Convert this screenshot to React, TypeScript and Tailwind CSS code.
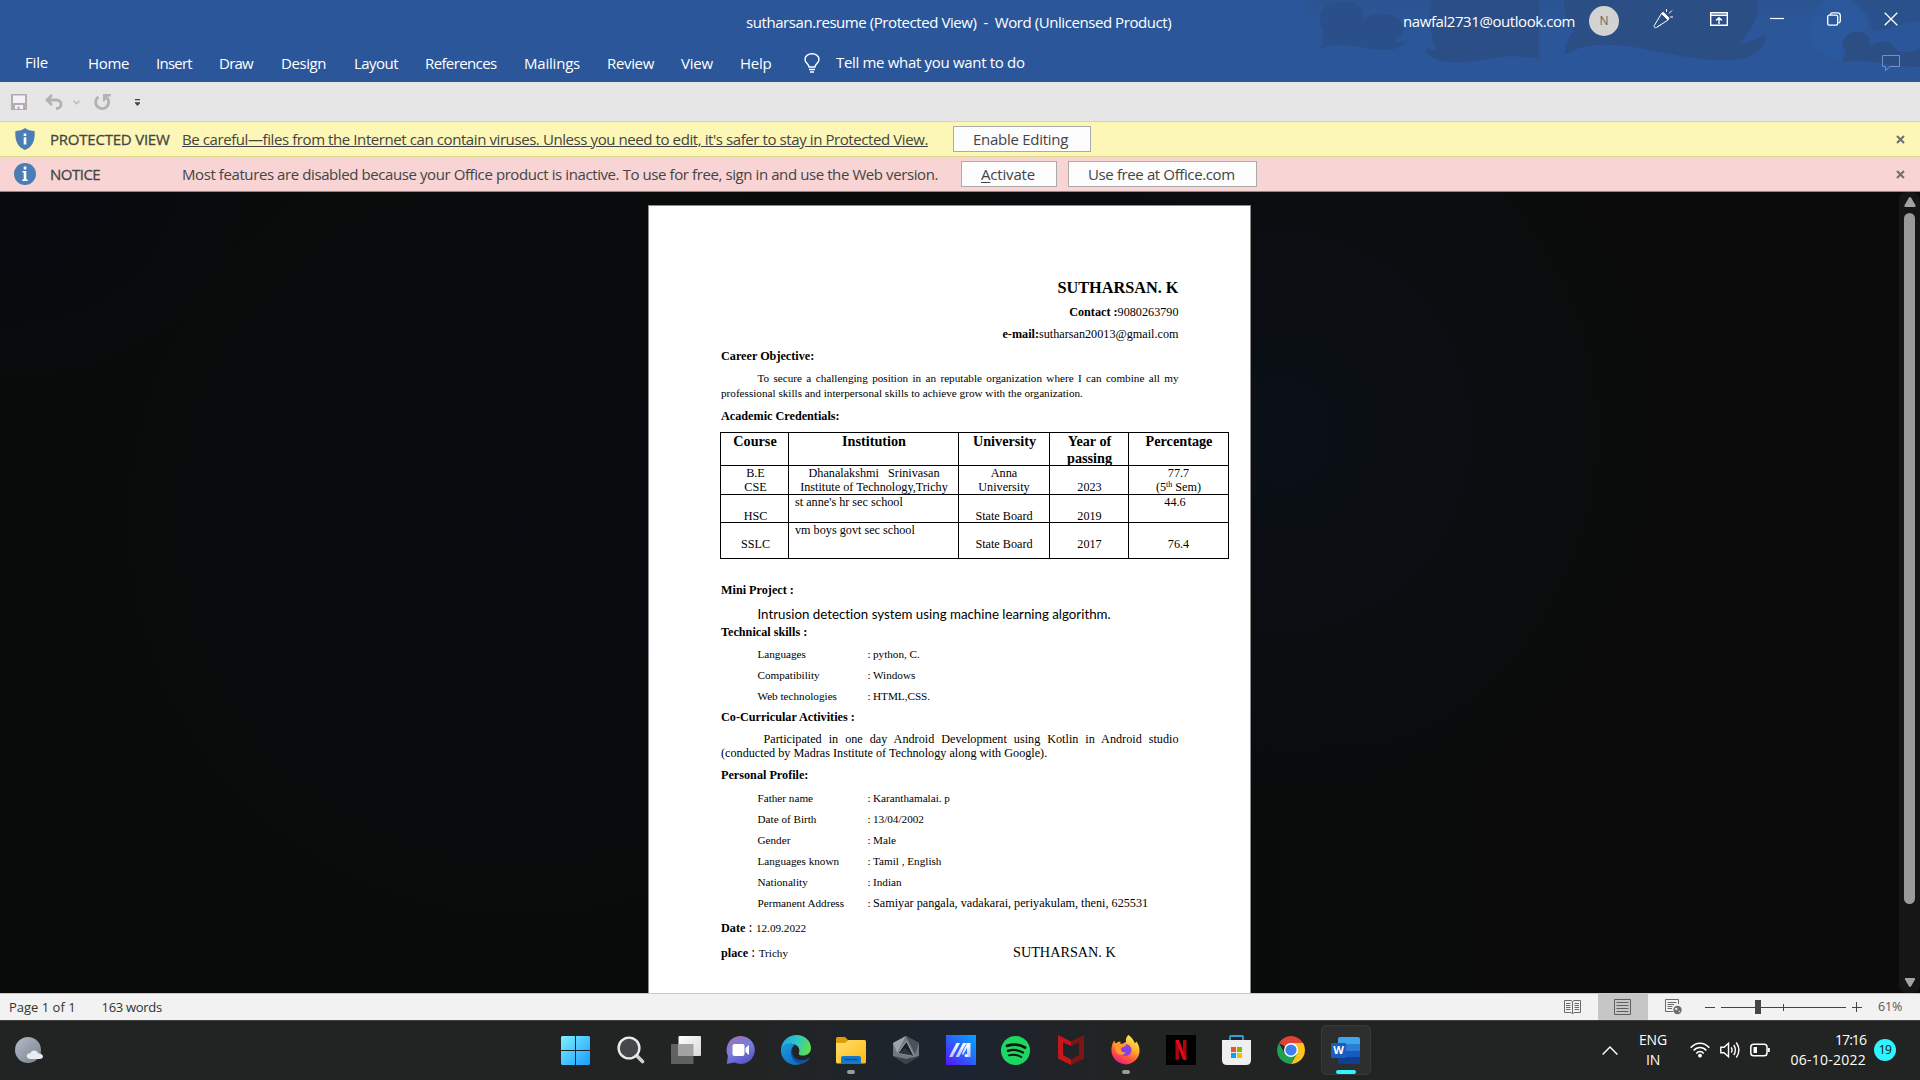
import type { ReactNode } from "react";

/* ---------- Title bar and ribbon tabs ---------- */

const tabs: { label: string; cls: string }[] = [
  { label: "Home", cls: "w-[68px] tracking-[-0.35px]" },
  { label: "Insert", cls: "w-[63px] tracking-[-0.75px]" },
  { label: "Draw", cls: "w-[62px] tracking-[-0.75px]" },
  { label: "Design", cls: "w-[73px] tracking-[-0.43px]" },
  { label: "Layout", cls: "w-[71px] tracking-[-0.54px]" },
  { label: "References", cls: "w-[99px] tracking-[-0.62px]" },
  { label: "Mailings", cls: "w-[83px] tracking-[-0.21px]" },
  { label: "Review", cls: "w-[74px] tracking-[-0.34px]" },
  { label: "View", cls: "w-[59px] tracking-[-0.2px]" },
  { label: "Help", cls: "w-[64px] tracking-[-0.24px]" },
];

function HeaderArt() {
  return (
    <svg className="absolute top-0 right-0 h-[82px] w-[640px]" viewBox="0 0 1568 246" preserveAspectRatio="none">
      <defs>
        <linearGradient id="shade" x1="0" y1="0" x2="0" y2="1">
          <stop offset="0" stopColor="#2b4a7c" stopOpacity="0.6" />
          <stop offset="1" stopColor="#2b579a" stopOpacity="0" />
        </linearGradient>
      </defs>
      <rect x="60" width="1508" height="150" fill="url(#shade)" opacity="0.45" />
      <g fill="#2b4e85">
        <path d="M98 148C104 128 108 112 104 88C92 50 98 8 150 5C196 6 208 26 204 60C230 28 300 40 304 84C300 104 292 116 280 126L312 122C304 146 270 154 230 148C180 138 130 122 98 148Z" opacity="0.75" />
        <path d="M370 0H635V180C590 160 540 170 490 180C430 196 366 186 356 150C362 140 372 152 384 152C366 100 362 50 370 0Z" opacity="0.9" />
        <path d="M697 0H1170C1172 50 1160 92 1124 128C1150 134 1166 112 1188 108C1192 140 1164 176 1110 180C1040 184 980 168 920 154C840 134 760 116 697 166C698 130 708 110 722 92C706 88 694 40 697 0Z" />
        <path d="M1377 188C1384 170 1390 160 1382 146C1370 114 1390 94 1416 96C1440 98 1450 118 1444 140C1468 116 1500 120 1510 150C1530 160 1550 156 1568 148V200C1500 206 1440 168 1377 188Z" />
        <path d="M1404 0H1568V62C1510 72 1476 96 1452 92C1444 50 1430 20 1404 0Z" opacity="0.55" />
      </g>
      <path d="M1334 0H1402C1436 30 1446 90 1430 94C1380 90 1372 130 1376 180C1330 160 1290 150 1300 80C1308 40 1320 20 1334 0Z" fill="#2c5ba3" opacity="0.5" />
    </svg>
  );
}

function WindowControls() {
  return (
    <div className="flex items-center">
      <svg className="mr-[37px] h-5 w-5" viewBox="0 0 20 20" fill="none" stroke="#fff" strokeWidth="1">
        <path d="M8.5 4.5L15 11L3.5 18.5C2 19.3 .6 18 1.3 16.5Z" />
        <path d="M8.5 4.5L10.3 3.2L16 9L15 11Z" fill="#fff" />
        <path d="M5 17.4L7.8 15.7M13.5 0V3M19 1.5L16 4.5M17 8H20" />
      </svg>
      <svg className="mr-[42px] h-[14px] w-[18px]" viewBox="0 0 18 14" fill="none" stroke="#fff" strokeWidth="1.4">
        <path d="M.7 .7H17.3V13.3H.7ZM.7 3.2H17.3M9 12V6M6 8.5L9 5.6L12 8.5" />
      </svg>
      <svg className="mr-[43px] h-[14px] w-[14px]" viewBox="0 0 14 14" stroke="#fff" strokeWidth="1.2">
        <path d="M0 6.5H14" />
      </svg>
      <svg className="mr-[43px] h-[14px] w-[14px]" viewBox="0 0 14 14" fill="none" stroke="#fff" strokeWidth="1.3">
        <rect x=".7" y="3.2" width="10" height="10" rx="1.6" />
        <path d="M3.4 3V2.3C3.6 1.3 4.2 .8 5.2 .8H10.5C12.2 .8 13.3 1.9 13.3 3.6V9C13.3 10 12.6 10.8 11.4 11" />
      </svg>
      <svg className="mr-[22px] h-[14px] w-[14px]" viewBox="0 0 14 14" stroke="#fff" strokeWidth="1.3">
        <path d="M.7 .7L13.3 13.3M13.3 .7L.7 13.3" />
      </svg>
    </div>
  );
}

function Header() {
  return (
    <header className="relative h-[82px] bg-[#2b579a] text-[15px] text-white">
      <HeaderArt />
      <div className="relative flex h-[44px] justify-between">
        <div className="flex items-center pl-[746px] whitespace-pre tracking-[-0.43px]">
          {"sutharsan.resume (Protected View)  -  Word (Unlicensed Product)"}
        </div>
        <div className="flex h-[38px]">
          <span className="mt-[10px] leading-[22px] tracking-[-0.43px]">nawfal2731@outlook.com</span>
          <span className="mt-[6px] mr-[34px] ml-[14px] flex h-[30px] w-[30px] items-center justify-center rounded-full bg-[#d2d2d2] text-[12px] text-[#666]">
            N
          </span>
          <WindowControls />
        </div>
      </div>
      <nav className="relative flex h-[38px] items-center">
        <span className="w-[63.5px] pb-[2px] pl-[25px] tracking-[-0.2px]">File</span>
        <div className="flex pl-[24.5px]">
          {tabs.map((t) => (
            <span key={t.label} className={t.cls}>
              {t.label}
            </span>
          ))}
        </div>
        <svg className="mr-[16px] h-[20px] w-[16px]" viewBox="0 0 16 20" fill="none" stroke="#fff" strokeWidth="1.4">
          <path d="M5 14C5 11 1 10 1 6.5C1 3.2 4 .8 8 .8S15 3.2 15 6.5C15 10 11 11 11 14ZM5 16.5H11M6 19H10" />
        </svg>
        <span className="pb-[2px] tracking-[-0.32px]">Tell me what you want to do</span>
        <svg className="mr-[20px] ml-auto h-[17px] w-[18px]" viewBox="0 0 18 17" fill="none" stroke="#7391c0" strokeWidth="1">
          <path d="M.5 .5H17.5V11.5H7.5L3.5 15.8V11.5H.5Z" />
        </svg>
      </nav>
    </header>
  );
}

/* ---------- Quick access toolbar and message bars ---------- */

function QuickAccess() {
  return (
    <div className="flex h-[40px] items-center border-b border-[#d9d6a0] bg-[#e6e6e6] pt-px pl-[11px]">
      <svg className="h-4 w-4" viewBox="0 0 16 16">
        <path d="M0 0H16V16H0Z" fill="#b1aeb1" />
        <path d="M2 1.5H14V9H2ZM4 11H12V15H8.6V12.4H6.4V15H4Z" fill="#f6f1f8" />
      </svg>
      <svg className="ml-[18px] h-4 w-[18px]" viewBox="0 0 18 16" fill="none" stroke="#b1b1b1" strokeWidth="2.8">
        <path d="M1.5 6H11C18 6 17.5 14.6 11 14.6" />
        <path d="M7 1L2 6L7 11" strokeWidth="2.6" />
      </svg>
      <svg className="ml-[10px] h-[5px] w-[7px]" viewBox="0 0 7 5" fill="none" stroke="#b8b8b8" strokeWidth="1.3">
        <path d="M.5 .8L3.5 3.8L6.5 .8" />
      </svg>
      <svg className="ml-[14px] h-[17px] w-[17px]" viewBox="0 0 17 17" fill="none" stroke="#b1b1b1" strokeWidth="2.8">
        <path d="M4.5 2.8A6.5 6.5 0 1 0 12.8 3.6" />
        <path d="M9 0H16.8V2.4H13L10.5 7.5H9Z" fill="#b1b1b1" stroke="none" />
      </svg>
      <svg className="ml-[24px] h-[7px] w-[5px]" viewBox="0 0 5 7" fill="#444">
        <path d="M0 0H5V1.2H0ZM0 3.2H5V4.2L2.5 7L0 4.2Z" />
      </svg>
    </div>
  );
}

function BarButton({ cls, children }: { cls: string; children: ReactNode }) {
  return (
    <button className={`${cls} flex h-[26px] items-center border border-[#ababab] bg-[#fdfdfd] whitespace-nowrap`}>
      {children}
    </button>
  );
}

function BarClose() {
  return (
    <svg className="mr-[15px] ml-auto h-[9px] w-[9px]" viewBox="0 0 9 9" stroke="#6e6e6e" strokeWidth="2">
      <path d="M1 1L8 8M8 1L1 8" />
    </svg>
  );
}

function MessageBars() {
  return (
    <div className="text-[15px] text-[#444]">
      <div className="flex h-[35px] items-center border-b border-[#dcd98c] bg-[#fcf7b6]">
        <svg className="ml-[15px] h-[22px] w-[20px]" viewBox="0 0 20 22">
          <path d="M10 0C12 2 16 3 19.5 3C20.5 11 18 19 10 22C2 19 -.5 11 .5 3C4 3 8 2 10 0Z" fill="#4a7db5" />
          <path d="M8.7 5.4H11.3V8H8.7ZM8.7 9.3H11.3V16.5H8.7Z" fill="#fff" />
        </svg>
        <span className="ml-[15px] w-[132px] tracking-[-0.22px] [-webkit-text-stroke:0.3px_#444]">PROTECTED VIEW</span>
        <span className="w-[771px] whitespace-nowrap tracking-[-0.412px] underline underline-offset-1">
          Be careful—files from the Internet can contain viruses. Unless you need to edit, it's safer to stay in Protected View.
        </span>
        <BarButton cls="w-[138px] pl-[19px] tracking-[-0.28px]">Enable Editing</BarButton>
        <BarClose />
      </div>
      <div className="flex h-[35px] items-center border-b border-[#d9696b] bg-[#f8d4d4]">
        <svg className="ml-[14px] h-[22px] w-[22px]" viewBox="0 0 22 22">
          <circle cx="11" cy="11" r="11" fill="#4a7db5" />
          <path d="M9.7 3.6H12.3V6.4H9.7ZM8.5 8H12.3V16.4H13.7V18H8.3V16.4H9.7V9.6H8.5Z" fill="#fff" />
        </svg>
        <span className="ml-[14px] w-[132px] tracking-[-0.5px] [-webkit-text-stroke:0.3px_#444]">NOTICE</span>
        <span className="w-[779px] whitespace-nowrap tracking-[-0.41px]">
          Most features are disabled because your Office product is inactive. To use for free, sign in and use the Web version.
        </span>
        <BarButton cls="mr-[11px] w-[96px] pl-[19px] tracking-[-0.18px]">
          <span className="underline underline-offset-2">A</span>ctivate
        </BarButton>
        <BarButton cls="w-[189px] pl-[19px] tracking-[-0.38px]">Use free at Office.com</BarButton>
        <BarClose />
      </div>
    </div>
  );
}

/* ---------- Document ---------- */

function Line({ h, children }: { h: string; children: ReactNode }) {
  return <div className={`${h} flex items-end leading-[14px] whitespace-pre`}>{children}</div>;
}

function Field({ h = "h-[21px]", label, big, children }: { h?: string; label: string; big?: boolean; children: string }) {
  return (
    <Line h={h}>
      <span className="ml-[36.5px] w-[110px] text-[11.18px]">{label}</span>
      <span className="w-[5.5px] text-[11.18px]">: </span>
      <span className={big ? "text-[12.2px]" : "text-[11.18px]"}>{children}</span>
    </Line>
  );
}

const cell = "border-r border-b border-black text-center whitespace-pre";

function Credentials() {
  return (
    <div className="mt-[9px] -ml-px grid w-[509px] grid-cols-[68px_170px_91px_79px_100px] grid-rows-[33px_29px_28px_36px] border-t border-l border-black leading-[14px]">
      {["Course", "Institution", "University", "Year of\npassing", "Percentage"].map((t) => (
        <div key={t} className={`${cell} pl-px text-[14.23px] leading-[16.5px] font-bold`}>
          {t}
        </div>
      ))}
      <div className={`${cell} pl-[2px]`}>{"B.E\nCSE"}</div>
      <div className={`${cell} pl-px`}>{"Dhanalakshmi   Srinivasan\nInstitute of Technology,Trichy"}</div>
      <div className={cell}>{"Anna\nUniversity"}</div>
      <div className={`${cell} pl-px`}>{"\n2023"}</div>
      <div className={cell}>
        {"77.7\n(5"}
        <span className="relative -top-[4px] text-[8px] leading-none">th</span>
        {" Sem)"}
      </div>
      <div className={`${cell} pl-[2px]`}>{"\nHSC"}</div>
      <div className="border-r border-b border-black pl-[6px]">st anne's hr sec school</div>
      <div className={cell}>{"\nState Board"}</div>
      <div className={`${cell} pl-px`}>{"\n2019"}</div>
      <div className={`${cell} pr-[7px]`}>44.6</div>
      <div className={`${cell} pl-[2px]`}>{"\nSSLC"}</div>
      <div className="border-r border-b border-black pl-[6px]">vm boys govt sec school</div>
      <div className={cell}>{"\nState Board"}</div>
      <div className={`${cell} pl-px`}>{"\n2017"}</div>
      <div className={cell}>{"\n76.4"}</div>
    </div>
  );
}

function Page() {
  return (
    <article className="mt-[13px] ml-[648px] h-[788px] w-[603px] border border-b-0 border-[#8c8c8c] bg-white pl-[72px] font-['Liberation_Serif',serif] text-[12.2px] text-black">
      <div className="w-[457.5px]">
        <div className="flex flex-col items-end">
          <Line h="h-[89px]"><b className="text-[16.27px]">SUTHARSAN. K</b></Line>
          <Line h="h-[24px]"><b>Contact :</b>9080263790</Line>
          <Line h="h-[22px]"><b>e-mail:</b>sutharsan20013@gmail.com</Line>
        </div>
        <Line h="h-[22px]"><b>Career Objective:</b></Line>
        <p className="mt-[8px] text-justify indent-[36.5px] text-[11.18px] leading-[15px]">
          To secure a challenging position in an reputable organization where I can combine all my professional skills and
          interpersonal skills to achieve grow with the organization.
        </p>
        <Line h="h-[22px]"><b>Academic Credentials:</b></Line>
        <Credentials />
        <Line h="h-[38px]"><b>Mini Project :</b></Line>
        <Line h="h-[24px]">
          <span className="ml-[36.5px] font-['Lato',sans-serif] text-[13.3px] [font-variant-ligatures:none]">
            Intrusion detection system using machine learning algorithm.
          </span>
        </Line>
        <Line h="h-[18px]"><b>Technical skills :</b></Line>
        <Field h="h-[22px]" label="Languages">python, C.</Field>
        <Field label="Compatibility">Windows</Field>
        <Field label="Web technologies">HTML,CSS.</Field>
        <Line h="h-[21px]"><b>Co-Curricular Activities :</b></Line>
        <p className="mt-[8px] text-justify indent-[42.5px] leading-[14px]">
          Participated in one day Android Development using Kotlin in Android studio (conducted by Madras Institute of
          Technology along with Google).
        </p>
        <Line h="h-[22px]"><b>Personal Profile:</b></Line>
        <Field h="h-[23px]" label="Father name">Karanthamalai. p</Field>
        <Field label="Date of Birth">13/04/2002</Field>
        <Field label="Gender">Male</Field>
        <Field label="Languages known">Tamil , English</Field>
        <Field label="Nationality">Indian</Field>
        <Field label="Permanent Address" big>Samiyar pangala, vadakarai, periyakulam, theni, 625531</Field>
        <Line h="h-[25px]">
          <b>Date </b>
          <span className="pb-px text-[14.2px]">: </span>
          <span className="text-[11.18px]">12.09.2022</span>
        </Line>
        <Line h="h-[25px]">
          <span className="flex w-[292px] items-end">
            <b>place </b>
            <span className="pb-px text-[14.2px]">: </span>
            <span className="text-[11.18px]">Trichy</span>
          </span>
          <span className="pb-px text-[14.23px]">SUTHARSAN. K</span>
        </Line>
      </div>
    </article>
  );
}

function Workspace() {
  return (
    <main className="flex h-[801px] overflow-hidden bg-[#090b0b] bg-[radial-gradient(ellipse_400px_420px_at_1280px_240px,#0b1017,transparent),radial-gradient(ellipse_420px_420px_at_520px_330px,#0a0b10,transparent),radial-gradient(ellipse_260px_200px_at_0px_0px,#070910,transparent),linear-gradient(90deg,transparent_60%,#0b0b0a)]">
      <div className="w-[1899px]">
        <Page />
      </div>
      <div className="flex w-[21px] flex-col items-center rounded-[8px] bg-[#161616] pt-[5px]">
        <svg className="h-[10px] w-[12px]" viewBox="0 0 12 10"><path d="M5 .6Q6 -.4 7 .6L11.6 8.4Q12 10 10.5 10H1.5Q0 10 .4 8.4Z" fill="#a3a3a3" /></svg>
        <div className="mt-[6px] h-[691px] w-[11px] rounded-full bg-[#9a9a9a]" />
        <svg className="mt-[74px] h-[9px] w-[12px]" viewBox="0 0 12 10"><path d="M5 9.4Q6 10.4 7 9.4L11.6 1.6Q12 0 10.5 0H1.5Q0 0 .4 1.6Z" fill="#a3a3a3" /></svg>
      </div>
    </main>
  );
}

/* ---------- Status bar ---------- */

function StatusBar() {
  return (
    <footer className="flex h-[27px] items-center border-t border-[#c8c8c8] bg-[#f2f2f2] text-[13px] text-[#333]">
      <span className="ml-[9px] w-[92.5px] pt-px">Page 1 of 1</span>
      <span className="pt-px tracking-[-0.3px]">163 words</span>
      <svg className="mr-[17px] ml-auto h-[15px] w-[17px]" viewBox="0 0 17 15" fill="none" stroke="#6b6b6b">
        <path d="M.5 .5H7L8.5 1.5L10 .5H16.5V12.5H10L8.5 14L7 12.5H.5ZM8.5 1.5V14M2 3.5H6.5M2 5.5H6.5M2 7.5H6.5M2 9.5H6.5M10.5 3.5H15M10.5 5.5H15M10.5 7.5H15M10.5 9.5H15" />
      </svg>
      <div className="flex h-full w-[50px] items-center bg-[#c6c6c6] pl-[16px]">
        <svg className="h-[16px] w-[17px]" viewBox="0 0 17 16" fill="none" stroke="#5f5f5f">
          <path d="M.5 .5H16.5V15.5H.5ZM2.5 3.5H14.5M2.5 6.5H14.5M2.5 9.5H14.5M2.5 12.5H14.5" />
        </svg>
      </div>
      <svg className="ml-[17px] h-[16px] w-[17px]" viewBox="0 0 17 16" fill="none" stroke="#6b6b6b">
        <path d="M8 12.5H.5V.5H13.5V5M2.5 3.5H11.5M2.5 5.5H9M2.5 7.5H7.5M2.5 9.5H7" />
        <circle cx="12.5" cy="11" r="4.2" fill="#6b6b6b" stroke="none" />
        <path d="M9.8 9.2L12 8.8L12.6 10.4L11 11.6ZM13.5 12L15.2 11.6L14 13.8Z" fill="#f2f2f2" stroke="none" />
      </svg>
      <div className="ml-[23px] h-px w-[10px] bg-[#444]" />
      <svg className="ml-[6px] h-[14px] w-[125px]" viewBox="0 0 125 14">
        <path d="M0 7.5H125M62.5 4V11" stroke="#444" />
        <path d="M34 0H40V14H34Z" fill="#444" />
      </svg>
      <svg className="ml-[6px] h-[10px] w-[10px]" viewBox="0 0 10 10" stroke="#444"><path d="M0 5.5H10M4.5 0V10" /></svg>
      <span className="ml-[16px] w-[42px] pt-px text-[12.5px] tracking-[-0.2px] text-[#555]">61%</span>
    </footer>
  );
}

/* ---------- Taskbar ---------- */

function StartIcon() {
  return (
    <svg className="h-[29px] w-[29px]" viewBox="0 0 29 29">
      <defs>
        <linearGradient id="win" x1="0" y1="0" x2="1" y2="1" gradientUnits="objectBoundingBox">
          <stop offset="0" stopColor="#7cf0ff" /><stop offset="1" stopColor="#1a9dff" />
        </linearGradient>
      </defs>
      <path d="M1 0H14V14H0V1ZM15 0H28L29 1V14H15ZM0 15H14V29H1L0 28ZM15 15H29V28L28 29H15Z" fill="url(#win)" />
    </svg>
  );
}

function SearchIcon() {
  return (
    <svg className="h-[28px] w-[28px]" viewBox="0 0 28 28">
      <path d="M19 19L25.5 25.5" stroke="#cfd2d6" strokeWidth="3.6" strokeLinecap="round" />
      <circle cx="12" cy="12" r="10.4" fill="#454848" stroke="#e9ebee" strokeWidth="2.4" />
    </svg>
  );
}

function TaskViewIcon() {
  return (
    <svg className="h-[28px] w-[30px]" viewBox="0 0 30 28">
      <defs>
        <linearGradient id="tv" x1="0" y1="0" x2="1" y2="1"><stop stopColor="#fff" /><stop offset="1" stopColor="#d8d8d8" /></linearGradient>
      </defs>
      <rect x="0" y="8" width="22.5" height="20" rx="1" fill="#606161" />
      <rect x="7.5" y="0" width="22.5" height="20" rx="1" fill="url(#tv)" />
      <path d="M7.5 8H22.5V20H7.5Z" fill="#a3a3a3" />
    </svg>
  );
}

function ChatIcon() {
  return (
    <svg className="h-[28px] w-[29px]" viewBox="0 0 29 28">
      <defs>
        <linearGradient id="chat" x1=".1" y1="0" x2=".6" y2="1"><stop stopColor="#a36fb0" /><stop offset=".5" stopColor="#7b7fdc" /><stop offset="1" stopColor="#5558c8" /></linearGradient>
      </defs>
      <path d="M15 0A14 14 0 1 1 8.5 26.5L.8 28L1.9 20A14 14 0 0 1 15 0Z" fill="url(#chat)" />
      <rect x="6.5" y="8" width="12" height="12" rx="2" fill="#fff" />
      <path d="M19.5 12L23 9V19L19.5 16Z" fill="#fff" />
    </svg>
  );
}

function EdgeIcon() {
  return (
    <svg className="h-[30px] w-[30px]" viewBox="0 0 30 30">
      <defs>
        <linearGradient id="edgeTop" x1="0" y1=".3" x2="1" y2=".6"><stop stopColor="#1ea7e0" /><stop offset=".5" stopColor="#2fc8c4" /><stop offset="1" stopColor="#62e04a" /></linearGradient>
        <linearGradient id="edgeLow" x1="0" y1="0" x2="1" y2="1"><stop stopColor="#1b9de2" /><stop offset="1" stopColor="#0c62b8" /></linearGradient>
      </defs>
      <path d="M0 14C1 5 8 0 15.5 0C24 0 30 6 30 13C30 18 26 20.5 22 20.5C19 20.5 17.5 19.5 17.8 18.4C18.6 17 19.4 12 14 9.5C9 7.5 3 9 0 14Z" fill="url(#edgeTop)" />
      <path d="M0 14C2.5 8.5 9.5 7.5 14 9.8C10.5 12 9 17 11.5 22C13.5 26 18.5 28.5 23.5 27.3C17 31.5 9 30.5 4 25.5C.8 22 -.5 18 0 14Z" fill="url(#edgeLow)" />
      <path d="M12 11.5C10 17 11 22 17 24.5C21.5 26 25 24.5 27.5 23C28.3 22.7 28.7 23.2 28.2 24C26.5 26.5 23.5 28.5 19.5 28.5C12 28 7.5 20 12 11.5Z" fill="#12509a" />
    </svg>
  );
}

function FolderIcon() {
  return (
    <svg className="h-[27px] w-[30px]" viewBox="0 0 30 27">
      <defs>
        <linearGradient id="fold" x1="0" y1="0" x2="1" y2="1"><stop stopColor="#ffdf6e" /><stop offset="1" stopColor="#fdb913" /></linearGradient>
      </defs>
      <path d="M0 1.5Q0 0 1.5 0H9L12.5 3.5V9H0Z" fill="#e09c07" />
      <path d="M0 6H9L12.5 3H28.5Q30 3 30 4.5V25Q30 26.5 28.5 26.5H1.5Q0 26.5 0 25Z" fill="url(#fold)" />
      <path d="M5 27V21Q5 19 7 19H23Q25 19 25 21V27Z" fill="#1377cc" />
      <path d="M8.5 22.5H21.5" stroke="#0a4d90" strokeWidth="1.3" />
    </svg>
  );
}

function ArmouryIcon() {
  return (
    <svg className="h-[28px] w-[26px]" viewBox="0 0 26 28">
      <path d="M13 0L26 7V20L13 28L0 20V7Z" fill="#6f7780" />
      <path d="M13 0L26 7L22 18Z" fill="#4b5157" />
      <path d="M13 0L0 7L4 17Z" fill="#9aa3ab" />
      <path d="M0 20L13 23L26 20L13 28Z" fill="#3d4145" />
      <path d="M13.5 5L21 20L5 17Z" fill="#1d2226" stroke="#a9b0b6" strokeWidth="1" />
      <path d="M5 17L12 12L21 20Z" fill="#2f353a" />
    </svg>
  );
}

function MyAsusIcon() {
  return (
    <svg className="h-[30px] w-[30px]" viewBox="0 0 30 30">
      <defs>
        <linearGradient id="asus" x1="0" y1="1" x2="1" y2="0"><stop stopColor="#5a12f5" /><stop offset=".5" stopColor="#2a62fb" /><stop offset="1" stopColor="#02a7ff" /></linearGradient>
        <linearGradient id="asusMark" x1="0" y1="0" x2="0" y2="1"><stop stopColor="#fff" /><stop offset="1" stopColor="#b9c3fb" /></linearGradient>
      </defs>
      <path d="M0 0H30V30H0Z" fill="url(#asus)" />
      <path d="M3 22L10.5 8H14L6.5 22ZM9.5 22L17 8H20.5L13 22ZM21 8H24.5V22H21V13L17.5 19.5H15.5Z" fill="url(#asusMark)" />
      <circle cx="20.2" cy="20.5" r="1.6" fill="#fff" />
    </svg>
  );
}

function SpotifyIcon() {
  return (
    <svg className="h-[29px] w-[29px]" viewBox="0 0 29 29" fill="none" stroke="#101510" strokeLinecap="round">
      <circle cx="14.5" cy="14.5" r="14.5" fill="#1ed760" stroke="none" />
      <path d="M6 9.8C12 8 19 8.6 24 11.5" strokeWidth="2.8" />
      <path d="M7 14.8C12 13.3 17.5 14 22 16.5" strokeWidth="2.3" />
      <path d="M7.8 19.3C12 18.3 16.5 18.8 20.3 21" strokeWidth="1.9" />
    </svg>
  );
}

function McAfeeIcon() {
  return (
    <svg className="h-[30px] w-[26px]" viewBox="0 0 26 30">
      <path d="M0 0L13 6.5V11L5 7.5V20L13 24.5V30L0 23.5Z" fill="#c4161c" />
      <path d="M26 0L13 6.5V11L21 7.5V20L13 24.5V30L26 23.5Z" fill="#7f1416" />
    </svg>
  );
}

function FirefoxIcon() {
  return (
    <svg className="h-[30px] w-[29px]" viewBox="0 0 29 30">
      <defs>
        <linearGradient id="fox" x1=".8" y1="0" x2=".3" y2="1"><stop stopColor="#fff14f" /><stop offset=".4" stopColor="#ffb02e" /><stop offset=".7" stopColor="#ff5a36" /><stop offset="1" stopColor="#f0148c" /></linearGradient>
      </defs>
      <path d="M17.5 0C22 3 23 7 24 8C25 8 25.5 7 25 6C29 11 30 18 26 23.5C22 29 15 31 9 28C2 25 -1 17.5 1 10.5C1.5 8 2.5 6.5 3.5 5.5C3.5 7 4 8 5 8.5C7 6.5 9 6.8 10 7C8.5 8 8 9.5 8.5 10.5L15 7C14.5 4 15.5 1.5 17.5 0Z" fill="url(#fox)" />
      <circle cx="14.5" cy="15" r="6" fill="#8a3fe0" />
      <path d="M3 9C7 7 12 9 15.5 9.5C14.5 12 11 11.5 10 13.5C9.5 16 12 18 15 17.5C12 21.5 5.5 20 4.5 15Z" fill="#ff9a2c" />
    </svg>
  );
}

function NetflixIcon() {
  return (
    <svg className="h-[30px] w-[30px]" viewBox="0 0 30 30">
      <path d="M0 0H30V30H0Z" fill="#000" />
      <path d="M9.5 5H13V24.5L9.5 25ZM17 5H20.5V25L17 24.5Z" fill="#a9070f" />
      <path d="M9.5 5H13L20.5 25L17 24.5Z" fill="#e50914" />
    </svg>
  );
}

function StoreIcon() {
  return (
    <svg className="h-[30px] w-[29px]" viewBox="0 0 29 30">
      <path d="M8 6V1.8Q8 1 8.8 1H20.2Q21 1 21 1.8V6" fill="none" stroke="#2aa5e0" strokeWidth="1.8" />
      <path d="M0 5H29V25Q29 30 24 30H5Q0 30 0 25Z" fill="#efefef" />
      <path d="M9 12H14V17H9Z" fill="#f25022" /><path d="M15 12H20V17H15Z" fill="#7fba00" />
      <path d="M9 18H14V23H9Z" fill="#00a4ef" /><path d="M15 18H20V23H15Z" fill="#ffb900" />
    </svg>
  );
}

function ChromeIcon() {
  return (
    <svg className="h-[28px] w-[28px]" viewBox="0 0 28 28">
      <path d="M14 14L1.88 7A14 14 0 0 1 26.12 7Z" fill="#dd4436" />
      <path d="M14 7H26.12A14 14 0 0 1 14 28L20 17.5Z" fill="#fcc31e" />
      <path d="M1.88 7A14 14 0 0 0 14 28L20.06 17.5L7.94 17.5Z" fill="#1fa052" />
      <circle cx="14" cy="14" r="7" fill="#fff" />
      <circle cx="14" cy="14" r="5.6" fill="#3f7fee" />
    </svg>
  );
}

function WordIcon() {
  return (
    <div className="relative h-[27px] w-[29px]">
      <div className="ml-[7px] flex h-full w-[22px] flex-col overflow-hidden rounded-[2px]">
        <div className="h-[7px] bg-[#41a5ee]" />
        <div className="h-[7px] bg-[#2b7cd3]" />
        <div className="h-[6px] bg-[#185abd]" />
        <div className="h-[7px] bg-[#103f91]" />
      </div>
      <div className="absolute top-[6px] left-0 flex h-[15px] w-[15px] items-center justify-center rounded-[1px] bg-[#1b5cbe] font-['Open_Sans',sans-serif] text-[11px] font-bold text-white">
        W
      </div>
    </div>
  );
}

const apps: { name: string; icon: ReactNode; state?: "open" | "active" }[] = [
  { name: "start", icon: <StartIcon /> },
  { name: "search", icon: <SearchIcon /> },
  { name: "tasks", icon: <TaskViewIcon /> },
  { name: "chat", icon: <ChatIcon /> },
  { name: "edge", icon: <EdgeIcon /> },
  { name: "files", icon: <FolderIcon />, state: "open" },
  { name: "armoury", icon: <ArmouryIcon /> },
  { name: "myasus", icon: <MyAsusIcon /> },
  { name: "spotify", icon: <SpotifyIcon /> },
  { name: "mcafee", icon: <McAfeeIcon /> },
  { name: "firefox", icon: <FirefoxIcon />, state: "open" },
  { name: "netflix", icon: <NetflixIcon /> },
  { name: "store", icon: <StoreIcon /> },
  { name: "chrome", icon: <ChromeIcon /> },
  { name: "word", icon: <WordIcon />, state: "active" },
];

function Tray() {
  return (
    <div className="flex h-[58px] items-center text-[14px] text-white">
      <svg className="mr-[21px] h-[9px] w-[16px]" viewBox="0 0 16 9" fill="none" stroke="#fff" strokeWidth="1.4"><path d="M.6 8.4L8 1L15.4 8.4" /></svg>
      <div className="w-[28px] text-center leading-[20px] tracking-[-0.17px]">
        <div>ENG</div>
        <div>IN</div>
      </div>
      <svg className="ml-[23px] h-[16px] w-[20px]" viewBox="0 0 20 16" fill="none" stroke="#fff" strokeWidth="1.5">
        <path d="M.7 5.8C6 -.4 14 -.4 19.3 5.8M3.6 8.6C7.2 4.5 12.8 4.5 16.4 8.6M6.3 11.4C8.3 9 11.7 9 13.7 11.4" />
        <circle cx="10" cy="13.7" r="1.9" fill="#fff" stroke="none" />
      </svg>
      <svg className="ml-[10px] h-[18px] w-[20px]" viewBox="0 0 20 18" fill="none" stroke="#fff" strokeWidth="1.4">
        <path d="M.8 6.3H4L8.5 2.3V15.7L4 11.7H.8ZM11.2 6.3Q13 9 11.2 11.7M13.8 4Q17 9 13.8 14M16.3 1.5Q21.5 9 16.3 16.5" />
      </svg>
      <svg className="ml-[10px] h-[14px] w-[20px]" viewBox="0 0 20 14" fill="none" stroke="#fff" strokeWidth="1.5">
        <rect x=".8" y="1.3" width="16.2" height="11.4" rx="2.8" />
        <path d="M3.5 4H7V10H3.5Z" fill="#fff" stroke="none" />
        <path d="M18.8 5V9" strokeWidth="2" />
      </svg>
      <div className="ml-[20px] w-[76px] text-right leading-[20px]">
        <div className="tracking-[-0.94px]">17:16</div>
        <div className="tracking-[0.24px]">06-10-2022</div>
      </div>
      <div className="mr-[24px] ml-[8px] flex h-[22px] w-[22px] items-center justify-center rounded-full bg-[#2ff3ff] text-[12px] tracking-[-0.6px] text-[#111]">
        19
      </div>
    </div>
  );
}

function Taskbar() {
  return (
    <div className="flex h-[60px] items-start border-t border-[#3e3e3e] bg-linear-to-r from-[#222424] from-40% via-[#1c2430] via-50% to-[#222323] to-58%">
      <svg className="mt-[15px] mr-[505px] ml-[15px] h-[28px] w-[28px]" viewBox="0 0 28 28">
        <defs>
          <linearGradient id="moon" x1="0" y1="0" x2="1" y2="1"><stop stopColor="#b4bcc8" /><stop offset="1" stopColor="#78818d" /></linearGradient>
        </defs>
        <circle cx="13" cy="14" r="13" fill="url(#moon)" />
        <path d="M15 23C10.5 22.8 10.8 17 15.2 17.3C16.5 13.5 22 13.5 23.2 17.5C29 17 29.5 23 24.5 23Z" fill="#e9edf1" />
      </svg>
      <div className="flex">
        {apps.map((a) => (
          <div key={a.name} className="relative flex h-[58px] w-[55.06px] items-center justify-center">
            {a.state === "active" && (
              <div className="absolute top-[4px] left-[2.5px] h-[50px] w-[50px] rounded-[5px] border border-[#373939] bg-[#2d2f2f]" />
            )}
            <div className={a.state === "active" ? "relative right-[0.5px]" : "relative"}>{a.icon}</div>
            {a.state === "open" && <div className="absolute top-[49px] h-[4px] w-[8px] rounded-full bg-[#9a9a9a]" />}
            {a.state === "active" && <div className="absolute top-[49px] h-[4px] w-[20px] rounded-full bg-[#2ff3ff]" />}
          </div>
        ))}
      </div>
      <div className="ml-auto">
        <Tray />
      </div>
    </div>
  );
}

export default function App() {
  return (
    <div className="h-[1080px] w-[1920px] overflow-hidden bg-[#222323] font-['Open_Sans',sans-serif]">
      <Header />
      <QuickAccess />
      <MessageBars />
      <Workspace />
      <StatusBar />
      <Taskbar />
    </div>
  );
}
